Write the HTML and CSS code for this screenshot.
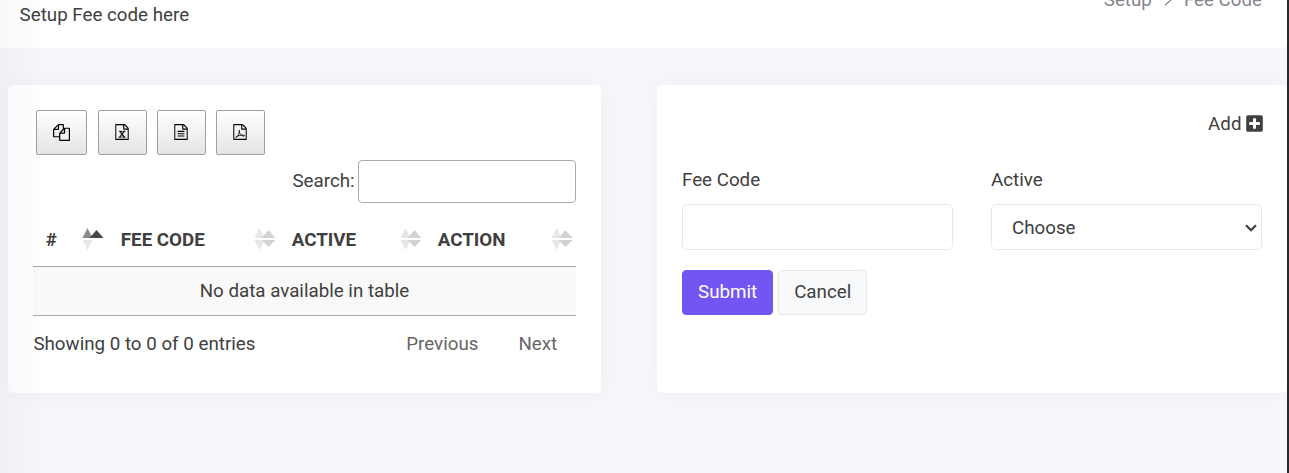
FILE: index.html
```html
<!DOCTYPE html>
<html lang="en">
<head>
<meta charset="utf-8">
<title>Fee Code</title>
<link rel="stylesheet" href="styles.css">
</head>
<body>
<svg class="defs" aria-hidden="true">
  <symbol id="page" viewBox="0 0 1536 1792"><path d="M1468 380q28 28 48 76t20 88v1152q0 40-28 68t-68 28h-1344q-40 0-68-28t-28-68v-1600q0-40 28-68t68-28h896q40 0 88 20t76 48zm-444-244v376h376q-10-29-22-41l-313-313q-12-12-41-22zm384 1528v-1024h-416q-40 0-68-28t-28-68v-416h-768v1536h1280z"/></symbol>
  <symbol id="sort" viewBox="0 0 22 22"><path fill="#e7e7e7" d="M5.500 0L10.500 10H.5zM.5 12h10l-5 10z"/><path fill="#d3d3d3" d="M14.500 2L21.500 10h-14zM7.500 12h14l-7 7z"/></symbol>
</svg>
<div class="app">
  <header class="topbar">
    <p class="subtitle">Setup Fee code here</p>
    <nav class="crumbs"><span>Setup</span><svg width="8" height="12" viewBox="0 0 8 12"><path d="M1 1l6 5-6 5" fill="none" stroke="currentColor" stroke-width="1.200"/></svg><span>Fee Code</span></nav>
  </header>
  <main class="content">
    <section class="card list">
      <div class="exports">
        <button class="tool copy" aria-label="Copy"><svg width="17" height="17" viewBox="0 0 1792 1792"><path d="M1696 384q40 0 68 28t28 68v1216q0 40-28 68t-68 28h-960q-40 0-68-28t-28-68v-288h-544q-40 0-68-28t-28-68v-672q0-40 20-88t48-76l408-408q28-28 76-48t88-20h416q40 0 68 28t28 68v328q68-40 128-40h416zm-544 213l-299 299h299v-299zm-640-384l-299 299h299v-299zm196 647l316-316v-416h-384v416q0 40-28 68t-68 28h-416v640h512v-256q0-40 20-88t48-76zm956 804v-1152h-384v416q0 40-28 68t-68 28h-416v640h896z"/></svg></button>
        <button class="tool" aria-label="Excel"><svg width="14" height="16" viewBox="0 0 1536 1792"><use href="#page"/><path stroke="#000" stroke-width="30" d="M450 770h290v90h-75l125 195 125-195h-75v-90h280v90h-80l-190 260 205 300h85v95H830v-95h80l-155-230-150 230h80v95H405v-95h85l210-300-175-260h-75z"/></svg></button>
        <button class="tool" aria-label="CSV"><svg width="14" height="16" viewBox="0 0 1536 1792"><use href="#page"/><path d="M384 768h768v128H384zM384 1024h768v128H384zM384 1280h768v128H384z"/></svg></button>
        <button class="tool" aria-label="PDF"><svg width="14" height="16" viewBox="0 0 1536 1792"><use href="#page"/><path fill="none" stroke="#000" stroke-width="95" d="M300 1510c150-30 330-320 400-600 35-140 30-220-5-220s-50 100 0 240c70 190 210 350 390 410 90 30 190 20 190-30s-100-80-290-60c-230 20-500 90-620 170-60 40-90 80-65 90z"/></svg></button>
      </div>
      <label class="search"><span>Search:</span><input type="text"></label>
      <table class="grid">
        <thead><tr>
          <th class="c1"><div class="head"><span>#</span><svg width="22" height="22" viewBox="0 0 22 22"><path fill="#8c8c8c" d="M5.500 0L10.500 10H.5z"/><path fill="#484848" d="M14.500 2L21.500 10h-14z"/><path fill="#e7e7e7" d="M.5 12h10l-5 10z"/></svg></div></th>
          <th class="c2"><div class="head"><span>FEE CODE</span><svg width="22" height="22"><use href="#sort"/></svg></div></th>
          <th class="c3"><div class="head"><span>ACTIVE</span><svg width="22" height="22"><use href="#sort"/></svg></div></th>
          <th class="c4"><div class="head"><span>ACTION</span><svg width="22" height="22"><use href="#sort"/></svg></div></th>
        </tr></thead>
        <tbody><tr><td colspan="4">No data available in table</td></tr></tbody>
      </table>
      <div class="foot"><span>Showing 0 to 0 of 0 entries</span><div class="pager"><span>Previous</span><span>Next</span></div></div>
    </section>
    <section class="card form">
      <div class="add">Add<svg width="17" height="19" viewBox="0 0 448 512"><path fill="currentColor" d="M400 32H48C21.500 32 0 53.500 0 80v352c0 26.500 21.500 48 48 48h352c26.500 0 48-21.500 48-48V80c0-26.500-21.500-48-48-48zm-32 252c0 6.600-5.400 12-12 12h-92v92c0 6.600-5.400 12-12 12h-56c-6.600 0-12-5.400-12-12v-92H92c-6.600 0-12-5.400-12-12v-56c0-6.600 5.400-12 12-12h92v-92c0-6.600 5.400-12 12-12h56c6.600 0 12 5.400 12 12v92h92c6.600 0 12 5.400 12 12v56z"/></svg></div>
      <div class="fields">
        <label class="field">Fee Code<input class="control" type="text"></label>
        <div class="field">Active<div class="control select">Choose<svg width="12" height="8" viewBox="0 0 12 8"><path d="M1 1.200l5 5 5-5" fill="none" stroke="#404040" stroke-width="2.200"/></svg></div></div>
      </div>
      <div class="actions"><button class="btn primary">Submit</button><button class="btn">Cancel</button></div>
    </section>
  </main>
  <div class="edge-shade"></div>
</div>
</body>
</html>
```
FILE: styles.css
```css
* { box-sizing: border-box; }
body { margin: 0; background: #f6f7fa; color: #404040; font: 18.75px/28px Roboto, sans-serif; }
.defs { position: absolute; width: 0; height: 0; }
.app { position: relative; height: 473px; overflow: hidden; border-right: 2px solid #29292b; }
.topbar { display: flex; justify-content: space-between; height: 48px; padding: 0 25px 0 19.6px; background: #fff; border-bottom-right-radius: 5px; }
.subtitle { margin: 1px 0 0; }
.crumbs { display: flex; align-items: center; gap: 12px; height: 28px; margin-top: -14px; color: #85858d; }
.content { display: flex; gap: 56px; padding: 37px 0 0 8px; }
.card { height: 308px; background: #fff; border-radius: 5px; box-shadow: 0 0 25px rgba(50, 50, 60, .04); }
.list { width: 593px; padding: 25px; }
.form { flex: 1; padding: 25px 24px 25px 25px; }
.exports { display: flex; gap: 10px; padding-left: 3px; }
.tool { display: flex; align-items: center; justify-content: center; width: 49px; height: 45px; padding: 0 0 1px; border: 1px solid #a0a0a0; border-radius: 2px; background: linear-gradient(#fff, #e4e4e4); }
.tool svg { margin-right: 0.500px; }
.tool.copy { width: 51px; margin-right: 1px; }
.search { display: flex; align-items: center; justify-content: flex-end; gap: 3.400px; margin-top: 5px; height: 43px; }
.search span { padding-bottom: 2px; }
.search input { width: 218px; height: 43px; border: 1px solid #aaa; border-radius: 4px; background: transparent; }
.grid { width: 543px; margin-top: 9px; table-layout: fixed; border-collapse: separate; border-spacing: 0; }
.grid th { height: 55px; padding: 0 3px 0 12.800px; border-bottom: 1px solid #aaa; font-weight: 700; }
.grid th.c1 { padding-right: 4px; }
.c1 { width: 75px; }
.c2 { width: 171px; }
.c3 { width: 146px; }
.c4 { width: 151px; }
.head { display: flex; align-items: center; justify-content: space-between; }
.head span { padding-top: 1px; }
.grid td { height: 49px; padding: 0; background: #f9f9f9; border-bottom: 1px solid #aaa; text-align: center; }
.foot { display: flex; justify-content: space-between; margin-top: 14px; padding-left: .4px; }
.pager { display: flex; gap: 40px; padding-right: 18.800px; color: #666; }
.add { display: flex; align-items: center; justify-content: flex-end; gap: 4.500px; }
.add svg { margin-bottom: 2px; }
.fields { display: grid; grid-template-columns: 271px 271px; gap: 38px; margin-top: 28px; }
.field { display: flex; flex-direction: column; gap: 10px; }
.control { width: 100%; height: 46px; border: 1px solid #e8e8e8; border-radius: 5px; background: #fff; }
.select { display: flex; align-items: center; justify-content: space-between; padding: 1px 4px 0 20px; }
.actions { display: flex; gap: 5px; margin-top: 20px; }
.btn { height: 45px; padding: 0 15px 2px; border: 1px solid #e8e8ea; border-radius: 4px; background: #f8f9fb; color: #404040; font: inherit; }
.primary { border-color: #7356f1; background: #7356f1; color: #fff; }
.edge-shade { position: absolute; inset: 0 auto 0 0; width: 45px; background: linear-gradient(90deg, rgba(80, 50, 110, .035), rgba(80, 50, 110, 0)); pointer-events: none; }
```
